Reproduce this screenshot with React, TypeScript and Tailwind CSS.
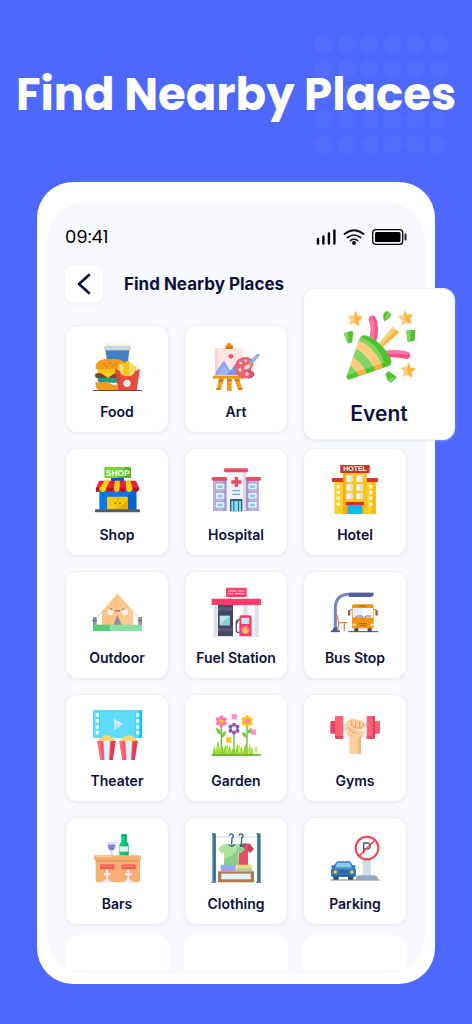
import React from "react";

type IconProps = { box: string; className?: string; children: React.ReactNode };

function Icon({ box, className = "size-[50px]", children }: IconProps) {
  return (
    <svg viewBox={box} className={className} aria-hidden="true">
      {children}
    </svg>
  );
}

function FoodIcon() {
  return (
    <Icon box="96 63 150 150">
      <path d="M141 69h63q4 0 4 4v6h-71v-6q0-4 4-4z" fill="#eef0f1" />
      <rect x="132" y="78" width="81" height="13" rx="4" fill="#cfd4d6" />
      <path d="M136 91h72l-5 45h-60z" fill="#4480c3" />
      <path d="M106 148q0-31 31-31h30q31 0 31 31z" fill="#f39c1f" />
      <g fill="#d87a12">
        <ellipse cx="133" cy="132" rx="4" ry="2.5" />
        <ellipse cx="150" cy="130" rx="4" ry="2.5" />
        <ellipse cx="167" cy="133" rx="4" ry="2.5" />
        <ellipse cx="141" cy="138" rx="3" ry="2" />
        <ellipse cx="159" cy="138" rx="3" ry="2" />
      </g>
      <rect x="113" y="147" width="65" height="15" fill="#f1c40f" />
      <rect x="105" y="160" width="75" height="14" rx="7" fill="#7f4036" />
      <path d="M122 158h44l-22 16z" fill="#f6cf22" />
      <path d="M113 174h64v14h-58q-6 0-6-14z" fill="#16a085" />
      <path d="M106 187h40q8 9 18 8h10v15h-56q-12-1-12-23z" fill="#f39c1f" />
      <path d="M174 134l10-4 3 38h-9zM210 130l10 3-4 35h-8zM219 141l11-5-4 28h-8z" fill="#f4d24b" />
      <path d="M185 128h12v42h-10zM197 123h12v47h-12z" fill="#f1c40f" />
      <path d="M181 134h10v36h-9zM208 129h8v40h-8zM219 140l5-2v24h-5z" fill="#f7dc6f" />
      <path d="M165 146l14 7q4 16 23 16t23-16l15-6-10 63h-54z" fill="#e74c3c" />
      <path d="M165 146l14 7 2 57h-5z" fill="#d9453a" />
      <circle cx="201" cy="190" r="11" fill="#ecf0f1" />
      <path d="M99 210h147v5H99z" fill="#7b3e35" />
    </Icon>
  );
}

function ArtIcon() {
  return (
    <Icon box="93 63 150 150">
      <path d="M105 84h85v84h-85z" fill="#ffe6e5" />
      <path d="M105 84h8v84h-8z" fill="#ffd0d0" />
      <path d="M137 87v-13h5v-5h11v5h5v13z" fill="#ee8f14" />
      <path d="M137 80h21v7h-21z" fill="#d97900" />
      <circle cx="153" cy="109" r="7" fill="#e9566c" />
      <path d="M107 165v-8l25-36 26 44z" fill="#8ea6fa" />
      <path d="M141 165l26-34 20 34z" fill="#7c94ec" />
      <path d="M112 165l20-29 14 20-6 9z" fill="#9fb5ff" />
      <path d="M99 167h91v9H99z" fill="#ee9413" />
      <path d="M117 176h14l-8 33h-14zM141 176h14v37h-14zM163 176h14l11 33h-14z" fill="#f29b1d" />
      <path d="M117 176h14l-2 9h-14zM141 176h14v8h-14zM163 176h14l3 8h-14zM109 204h14v5h-14zM174 204h14v5h-14z" fill="#d87a08" />
      <path d="M197 111c-22 0-33 16-32 33 1 22 18 33 39 31 10-1 18-6 19-12 1-7-6-7-9-10-5-7 7-14 6-24-1-11-10-18-23-18z" fill="#ee6174" />
      <path d="M200 148c6-2 9 2 15 6 4 3 9 5 8 10-2 7-11 12-21 12 8-5 17-9 10-14-6-4-14-5-12-14z" fill="#db4e66" />
      <g fill="#ffe8e8">
        <circle cx="197" cy="122" r="4" />
        <circle cx="182" cy="129" r="4" />
        <circle cx="180" cy="150" r="5" />
        <circle cx="201" cy="162" r="5" />
      </g>
      <path d="M191 147c1-8 7-15 16-14 3 1 4 5 3 8-3 7-11 8-19 6z" fill="#ffd9dc" />
      <path d="M205 129l8 8 4-5-8-8z" fill="#f0a321" />
      <path d="M208 125l21-21c5-4 8-3 9 0 1 4-3 7-6 10l-16 18z" fill="#7e99ec" />
      <path d="M213 127l19-20" stroke="#a5b8fc" strokeWidth="4" />
    </Icon>
  );
}

function Star({ x, y, turn }: { x: number; y: number; turn: number }) {
  return (
    <g transform={`translate(${x} ${y}) rotate(${turn})`}>
      <path
        d="M0-21L6-7 21-6 10 4 13 19 0 11-13 19-10 4-21-6-6-7z"
        fill="#ffcc7d"
        stroke="#ffcc7d"
        strokeWidth="3"
        strokeLinejoin="round"
      />
      <path d="M0-21L6-7 21-6 10 4 13 19 0 11z" fill="#ffb13d" stroke="#ffb13d" strokeWidth="2" strokeLinejoin="round" />
    </g>
  );
}

function EventIcon() {
  return (
    <Icon box="125 74 222 222" className="size-[74px]">
      <Star x={164} y={100} turn={6} />
      <Star x={316} y={98} turn={-10} />
      <Star x={323} y={255} turn={4} />
      <g strokeLinejoin="round" strokeWidth="3">
        <path d="M251 85l10-7 11 10-7 10-12 8-3-9z" fill="#4fc32d" stroke="#4fc32d" />
        <path d="M261 80l10 8-8 10-10 5z" fill="#7dd45c" />
        <path d="M131 144l23-6 4 4-4 29-12 2z" fill="#82d563" stroke="#82d563" />
        <path d="M143 141l13-3 2 6-5 27-9 1z" fill="#4fc32d" />
        <path d="M319 137l25-2-3 31-18 2z" fill="#4fc32d" stroke="#4fc32d" />
        <path d="M319 136l13-1-2 32-8 1z" fill="#82d563" />
        <path d="M257 265l8-6 23 16-15 16-11-7z" fill="#4fc32d" stroke="#4fc32d" />
        <path d="M262 282l24-9-13 18z" fill="#7dd45c" />
      </g>
      <path d="M216 102q11 24 2 60" fill="none" stroke="#ff4b8b" strokeWidth="22" strokeLinecap="round" />
      <path d="M212 97q11 34 3 66" fill="none" stroke="#ff75aa" strokeWidth="11" strokeLinecap="round" />
      <path d="M254 208q27-7 65 2" fill="none" stroke="#ff4b8b" strokeWidth="21" strokeLinecap="round" />
      <path d="M256 202q30-5 64 2" fill="none" stroke="#ff75aa" strokeWidth="10" strokeLinecap="round" />
      <path d="M235 176l41-52 21 16-52 45z" fill="#ffcc7d" />
      <path d="M243 183l43-49 11 7-50 45z" fill="#ffb13d" />
      <path
        d="M177 160q4-12 20-10c31 11 60 38 74 73 5 12 0 17-9 20l-111 38c-11 4-15-2-11-13z"
        fill="#82d563"
      />
      <path d="M175 166q45 15 73 80l-24 8Q200 206 166 190z" fill="#ffcc7d" />
      <path d="M158 216q20 10 42 46l-24 9q-9-18-26-29z" fill="#ffcc7d" />
      <path d="M190 150q-6 2-5 8c35 11 61 45 68 83l10-2c12-4 11-13 7-20-15-31-42-60-80-69z" fill="#4fc32d" />
      <path d="M140 270l121-41q8-1 11-9 3 19-10 23l-111 38q-13 4-11-11z" fill="#4fc32d" />
      <path d="M219 243l24-8 5 12-24 8zM168 260l24-8 8 11-24 8z" fill="#ffb13d" />
    </Icon>
  );
}

function ShopIcon() {
  return (
    <Icon box="96 57 150 150">
      <path d="M153 96h39v18h-39z" fill="#0459ca" />
      <rect x="133" y="66" width="80" height="33" rx="3" fill="#78d239" />
      <path d="M196 66h14q3 0 3 3v27q0 3-3 3h-38z" fill="#55b92f" />
      <text x="173" y="92" textAnchor="middle" fontFamily="Liberation Sans, Arial, sans-serif" fontSize="25" fontWeight="700" fill="#fff" textRendering="geometricPrecision">
        SHOP
      </text>
      <path d="M118 130h111v64H118z" fill="#0878f2" />
      <path d="M229 130v64h-75z" fill="#0b60d2" />
      <path d="M118 107h110l10 23q-3 11-10 11t-10-11q-2 11-11 11t-11-11q-2 11-11 11t-12-11q-2 11-12 11t-11-11q-2 11-11 11t-11-11q-2 11-10 11t-10-11z" fill="#ef1f3b" />
      <path d="M134 107h15l-10 23q-2 11-11 11t-10-11zM165 107h14v23q-3 11-9 11t-9-11zM197 107h14l7 23q-3 11-11 11t-9-11z" fill="#ffd500" />
      <path d="M108 127q6 4 10 0 0 14-10 14-1-7 0-14zM139 128h22q-2 13-11 13t-11-13zM179 128h19q-1 13-9 13t-10-13zM218 128h20q-2 13-10 13t-10-13z" fill="#bc0e2b" />
      <rect x="141" y="155" width="63" height="39" rx="4" fill="#f4c80b" />
      <path d="M173 155v39" stroke="#d7a700" strokeWidth="2" />
      <path d="M204 162v32h-33z" fill="#e5ae00" />
      <circle cx="166" cy="175" r="2.5" fill="#715400" />
      <circle cx="180" cy="175" r="2.5" fill="#715400" />
      <rect x="105" y="193" width="135" height="9" rx="2" fill="#565d65" />
    </Icon>
  );
}

function HospitalIcon() {
  const windows = [124, 152, 179];
  return (
    <Icon box="453 57 150 150">
      <path d="M459 105h138v93H459z" fill="#b7b0dd" />
      <path d="M490 105h10v93h-10zM557 105h9v93h-9z" fill="#9e97cc" />
      <path d="M500 79h57v119h-57z" fill="#f3f2fa" />
      <path d="M550 79h7v119h-7z" fill="#d9d5ec" />
      <rect x="492" y="70" width="72" height="12" rx="4" fill="#e84d64" />
      <rect x="455" y="96" width="46" height="11" rx="4" fill="#e84d64" />
      <rect x="557" y="96" width="46" height="11" rx="4" fill="#e84d64" />
      <path d="M524 96h10v10h10v10h-10v10h-10v-10h-10v-10h10z" fill="#eb4a64" />
      <path d="M517 137h23M517 148h23" stroke="#5bb0f1" strokeWidth="4" />
      {windows.map((y) => (
        <g key={y}>
          <rect x="468" y={y - 8} width="25" height="17" rx="2" fill="#ecebfa" />
          <rect x="473" y={y - 3} width="15" height="8" fill="#77d4f3" />
          <rect x="565" y={y - 8} width="25" height="17" rx="2" fill="#ecebfa" />
          <rect x="570" y={y - 3} width="15" height="8" fill="#77d4f3" />
        </g>
      ))}
      <path d="M510 162h37v37h-37z" fill="#32607e" />
      <path d="M514 168h6v31h-6zM523 168h11v31h-11zM537 168h6v31h-6z" fill="#85ddf8" />
    </Icon>
  );
}

function HotelIcon() {
  const rows = [91, 117, 143];
  return (
    <Icon box="105 57 150 150">
      <path d="M118 110h124v99H118z" fill="#ffd12d" />
      <path d="M229 110h13v99h-13z" fill="#f5b61a" />
      <path d="M144 82h71v127h-71z" fill="#ffc219" />
      <path d="M144 82h8v127h-8z" fill="#ffad09" />
      <rect x="136" y="60" width="88" height="24" fill="#d92d26" />
      <text x="180" y="79" textAnchor="middle" fontFamily="Liberation Sans, Arial, sans-serif" fontSize="21" fontWeight="700" fill="#fff" textRendering="geometricPrecision">
        HOTEL
      </text>
      <path d="M111 99h34v12h-34zM215 99h34v12h-34z" fill="#dd3328" />
      {rows.map((y) => (
        <g key={y}>
          <path d={`M154 ${y}h20v20h-20zM184 ${y}h20v20h-20z`} fill="#f7f6ef" />
          <path d={`M165 ${y}h9v20h-9zM195 ${y}h9v20h-9z`} fill="#dde1e1" />
        </g>
      ))}
      {[120, 137, 154, 172].map((y) => (
        <g key={y} fill="#fff3d0">
          <rect x="125" y={y} width="10" height="11" />
          <rect x="223" y={y} width="10" height="11" />
        </g>
      ))}
      <path d="M153 172h53v37h-53z" fill="#f7a70a" />
      <path d="M158 178h43v31h-43z" fill="#14b7ef" />
      <path d="M152 171h55v9h-55z" fill="#d92d26" />
    </Icon>
  );
}

function OutdoorIcon() {
  return (
    <Icon box="96 57 150 150">
      <path d="M173 78l-68 77M173 78l67 77" stroke="#f6cc89" strokeWidth="3" />
      <path d="M126 132l46-54 47 54v39h-93z" fill="#ffc383" />
      <path d="M172 78l47 54v39h-42z" fill="#ffc98f" />
      <circle cx="151" cy="133" r="9" fill="#fff3f2" />
      <circle cx="195" cy="133" r="9" fill="#fff3f2" />
      <path d="M151 123q3-2 5 1M187 124q2-3 5-1M166 128q3 4 7 0 4 4 7 0" fill="none" stroke="#515a68" strokeWidth="3" strokeLinecap="round" />
      <path d="M172 140l13 31h-25z" fill="#8690a5" />
      <path d="M99 147h11v24H99zM235 147h11v24h-11z" fill="#8992a7" />
      <path d="M97 155h14v5H97zM233 155h14v5h-14z" fill="#69748e" />
      <path d="M99 170h148v15q0 4-4 4H103q-4 0-4-4z" fill="#8ae09e" />
      <path d="M99 170h52q-4 9 0 19h-48q-4 0-4-4z" fill="#57ce77" />
    </Icon>
  );
}

function FuelIcon() {
  return (
    <Icon box="453 57 150 150">
      <path d="M512 84v12M547 84v12" stroke="#d8dce8" strokeWidth="3" />
      <rect x="498" y="59" width="62" height="28" rx="2" fill="#f5436a" />
      <path d="M505 69h25M535 69h18M505 77h14M524 77h29" stroke="#ffd4df" strokeWidth="3" />
      <path d="M461 109h12v95h-12zM549 109h14v65h-14zM584 109h12v95h-12z" fill="#dce1ec" />
      <path d="M474 109h45v95h-45z" fill="#464765" />
      <path d="M474 118h45v10h-45zM474 181h45v9h-45z" fill="#5c5c7e" />
      <path d="M479 143h31v29h-31z" fill="#bae9ed" />
      <path d="M510 143v29h-31z" fill="#88cfd8" />
      <rect x="455" y="92" width="148" height="19" rx="2" fill="#f73f68" />
      <path d="M540 154q-11 0-11 10v24q0 6 8 5h6" fill="none" stroke="#59536d" strokeWidth="4" />
      <path d="M534 158l-5 8" stroke="#4a465f" strokeWidth="5" />
      <path d="M538 149q0-7 7-7h23q7 0 7 7v56h-37z" fill="#f43c67" />
      <rect x="544" y="149" width="24" height="19" rx="2" fill="#b9e9ed" />
      <circle cx="556" cy="186" r="13" fill="#ff7598" />
      <path d="M556 176q15 17 0 20-14-2 0-20z" fill="#ffd640" />
      <path d="M458 206h142" stroke="#c7ccd9" strokeWidth="2" />
    </Icon>
  );
}

function BusIcon() {
  return (
    <Icon box="105 57 150 150">
      <path d="M121 181v-59q0-43 42-43h68" fill="none" stroke="#7783bf" strokeWidth="9" />
      <path d="M162 74h74v5q0 8-10 8h-64z" fill="#515e99" />
      <path d="M116 180h10v8h7v3h-24v-3h7z" fill="#45548e" stroke="#45548e" strokeWidth="3" />
      <path d="M126 140l5 24h27M148 165v24M132 165l-5 23" fill="none" stroke="#db8a4c" strokeWidth="4" />
      <path d="M159 191h91" stroke="#4a4e60" strokeWidth="3" />
      <path d="M172 126q-10-4-10 5v9M236 126q10-4 10 5v9" fill="none" stroke="#6d6b78" strokeWidth="3" />
      <rect x="159" y="126" width="7" height="17" rx="3" fill="#bd572a" />
      <rect x="241" y="126" width="7" height="17" rx="3" fill="#bd572a" />
      <rect x="178" y="177" width="12" height="15" rx="2" fill="#464b61" />
      <rect x="218" y="177" width="12" height="15" rx="2" fill="#464b61" />
      <rect x="171" y="109" width="65" height="72" rx="5" fill="#f49509" />
      <path d="M192 111h22v6h-22z" fill="#c97b0d" />
      <path d="M173 120h61v28h-61z" fill="#e9eafb" />
      <path d="M203 120h31v28h-31z" fill="#fafaff" />
      <path d="M181 149l6-5h15v5M207 149l6-5h16" fill="none" stroke="#667498" strokeWidth="3" />
      <path d="M192 167h24M195 173h18" stroke="#9c5b17" strokeWidth="3" />
      <path d="M173 167h10v7h-10zM225 167h10v7h-10z" fill="#ffe8aa" />
    </Icon>
  );
}

function Popcorn({ x }: { x: number }) {
  return (
    <g transform={`translate(${x} 0)`}>
      <path d="M3 155c0-11 6-12 11-12 2-8 22-10 27-1 9-1 12 6 12 13z" fill="#ffd66e" />
      <path d="M0 153h55l-9 57H9z" fill="#ff5366" />
      <path d="M43 153h12l-9 57h-8z" fill="#e8364e" />
      <path d="M18 153h20l-3 57H21z" fill="#daf5fd" />
      <path d="M0 153h8l7 57H9z" fill="#ff6e7a" />
    </g>
  );
}

function TheaterIcon() {
  return (
    <Icon box="96 60 150 150">
      <rect x="99" y="60" width="147" height="84" rx="3" fill="#5edcfa" />
      <path d="M237 60h6q3 0 3 3v78q0 3-3 3h-6z" fill="#0bc9f7" />
      <path d="M118 60v84M227 60v84" stroke="#40cff5" strokeWidth="2" />
      {[69, 87, 105, 122].map((y) => (
        <path key={y} d={`M107 ${y}h10v11h-10zM228 ${y}h10v11h-10z`} fill="#e7f9ff" />
      ))}
      <path d="M162 86l28 17-28 17z" fill="#d1f2ff" />
      <path d="M162 120l28-17h-28z" fill="#b6e8f9" />
      <Popcorn x={112} />
      <Popcorn x={178} />
    </Icon>
  );
}

function Flower({ x, y, petal, center }: { x: number; y: number; petal: string; center: string }) {
  return (
    <g transform={`translate(${x} ${y})`}>
      {[0, 60, 120, 180, 240, 300].map((angle) => (
        <circle key={angle} r="6" cy="-12" transform={`rotate(${angle})`} fill={petal} />
      ))}
      <circle r="11" fill={petal} />
      <circle r="7" fill={center} />
    </g>
  );
}

function GardenIcon() {
  return (
    <Icon box="453 60 150 150">
      <path d="M484 106v85M522 130v60M561 106v85" stroke="#69bd35" strokeWidth="4" />
      <path d="M484 133q-15 1-16-19 15 2 16 19zM484 143q1-18 14-19 0 17-14 19zM561 143q-2-16-15-18 0 17 15 18zM561 132q0-15 15-18 1 16-15 18z" fill="#72c83b" />
      <Flower x={484} y={94} petal="#ff70c4" center="#ffc817" />
      <Flower x={561} y={94} petal="#ffc20c" center="#ff80c4" />
      <Flower x={522} y={116} petal="#8b55b5" center="#fff" />
      <g fill="#ff8bd0">
        <path d="M515 72h6l2 4 2-4h6v6l-2 2 2 2v6h-6l-2-3-2 3h-6v-6l2-2-2-2zM572 118h6l2 4 2-4h6v6l-2 2 2 2v6h-6l-2-3-2 3h-6v-6l2-2-2-2z" />
      </g>
      <path d="M498 142h6l2 3 2-3h6v6l-2 2 2 2v6h-6l-2-2-2 2h-6v-6l2-2-2-2z" fill="#ffc20c" />
      <path d="M457 197q2-14 5-30 5 10 5 18 3-20 7-33 6 17 6 34 2-17 6-22 6 13 5 22 3-20 7-25 4 14 4 27 4-15 7-21 6 14 4 23 5-17 9-22 4 13 3 23 4-22 8-29 4 16 4 30 4-18 8-24 3 13 3 25 5-24 9-31 4 15 2 31 6-18 9-21 2 12 1 22 5-20 7-25 3 14 3 27z" fill="#8ed426" />
      <path d="M468 195l6-31 5 31M497 195l5-28 4 28M534 195l4-30 6 30M565 195l4-31 5 31M583 195l5-25 5 25" fill="none" stroke="#b1e951" strokeWidth="3" />
      <path d="M457 195h145" stroke="#58a92c" strokeWidth="5" strokeLinecap="round" />
    </Icon>
  );
}

function GymIcon() {
  return (
    <Icon box="105 60 150 150">
      <path d="M143 102h73v20h-73z" fill="#dde0e7" />
      <rect x="106" y="93" width="20" height="38" rx="3" fill="#e94464" />
      <rect x="235" y="93" width="20" height="38" rx="3" fill="#ff6073" />
      <rect x="120" y="78" width="25" height="68" rx="3" fill="#ff6073" />
      <path d="M120 138h25v5q0 3-3 3h-19q-3 0-3-3z" fill="#e6425e" />
      <rect x="215" y="78" width="25" height="68" rx="3" fill="#ff6073" />
      <path d="M233 78h4q3 0 3 3v62q0 3-3 3h-22v-7h18z" fill="#e6425e" />
      <path d="M163 192v-48q-10-10-10-27V98q3-9 11-8 3-5 10-3 7-2 10 3 6-3 10 1 6-3 9 3 5 0 5 8-1 16 0 24-1 13-10 20v46z" fill="#ffd09e" />
      <path d="M190 145q5-4 8-10v57h-8z" fill="#f4b576" />
      <path d="M157 112q10 3 10 10 4 7 13 5M170 91v14q3 8 11 7M182 93v18M194 95v17M205 100q3 13-7 14h-15" fill="none" stroke="#e79c60" strokeWidth="3" strokeLinecap="round" />
      <path d="M182 118h22q2 0 2-7h10v11h-30z" fill="#eceff5" />
    </Icon>
  );
}

function Stool({ x }: { x: number }) {
  return (
    <g transform={`translate(${x} 0)`}>
      <path d="M-3 171h6v12h7v6H3v10q1 5 10 7v4h-26v-4q9-2 10-7v-10h-7v-6h7z" fill="#eeeafd" />
      <rect x="-21" y="156" width="43" height="15" rx="3" fill="#f45c55" />
      <path d="M-18 162h35" stroke="#ff8374" strokeWidth="4" />
    </g>
  );
}

function BarsIcon() {
  return (
    <Icon box="96 62 150 150">
      <path d="M142 90h25q2 22-9 27v9l7 3h-21l7-3v-9q-12-7-9-27z" fill="#dedafb" />
      <path d="M144 97h21q0 17-10 17t-11-17z" fill="#7972df" />
      <path d="M149 100l3 5M157 101l4 4" stroke="#bdbaff" strokeWidth="3" />
      <path d="M184 66h16v22q6 6 6 14v23q0 5-5 5h-18q-5 0-5-5v-23q0-8 6-14z" fill="#06ce75" />
      <path d="M184 66h16v6h-16z" fill="#00a85a" />
      <path d="M195 72h5v16q6 6 6 14v23q0 5-5 5h-6z" fill="#00b969" />
      <path d="M179 102h26v16h-26z" fill="#eeeafb" />
      <path d="M107 140h133v64q0 6-6 6H113q-6 0-6-6z" fill="#f7b074" />
      <path d="M107 141h133v7H107z" fill="#e89c62" />
      <rect x="102" y="129" width="141" height="14" rx="3" fill="#f5ad72" />
      <path d="M107 132h48" stroke="#ffc993" strokeWidth="4" />
      <Stool x={141} />
      <Stool x={205} />
    </Icon>
  );
}

function ClothingIcon() {
  return (
    <Icon box="453 62 150 150">
      <path d="M461 74h135" stroke="#bfe0f2" strokeWidth="3" />
      <path d="M539 95l17-2 13 1 12 16-10 11-7-5v42h-29z" fill="#dd5065" />
      <path d="M563 99l6-5 12 16-10 11-7-5z" fill="#cf4059" />
      <path d="M497 94h9q9 8 18 0h11l19 17-11 12-8-5v40h-43v-40l-6 7-12-14 12-13z" fill="#aee29d" />
      <path d="M535 103q-7 25-38 34-5 3-5 21h43v-40l8 5 11-12z" fill="#8dcc89" />
      <path d="M503 95q12 7 20 0l4 1q-12 17-24-1zM539 96q8 5 15-2l3 2q-8 10-18 7z" fill="#346382" />
      <path d="M509 69q2-7 8-3 7 5-1 12l-1 17M538 69q2-7 8-3 7 5-1 12l-1 17" fill="none" stroke="#315b79" strokeWidth="4" strokeLinecap="round" />
      <path d="M457 67h10v139h-10zM591 67h10v139h-10z" fill="#4f86a7" />
      <path d="M461 67h6v139h-6zM595 67h6v139h-6z" fill="#346a8b" />
      <path d="M455 209h14M589 209h14M456 65h11M590 65h11" stroke="#305f7f" strokeWidth="4" />
      <rect x="482" y="157" width="46" height="10" rx="3" fill="#82b5ef" />
      <rect x="482" y="167" width="46" height="10" rx="3" fill="#b999e1" />
      <rect x="529" y="157" width="47" height="10" rx="3" fill="#ffd778" />
      <rect x="529" y="167" width="47" height="10" rx="3" fill="#9fdc9b" />
      <rect x="474" y="177" width="108" height="33" fill="#b37a52" />
      <rect x="484" y="184" width="88" height="17" fill="#e2f3fb" />
    </Icon>
  );
}

function ParkingIcon() {
  return (
    <Icon box="105 62 150 150">
      <path d="M203 139h25v55h-25z" fill="#cfdfe6" />
      <path d="M203 139h25v8h-25z" fill="#b5cad5" />
      <path d="M183 202v-6q0-7 9-7h46q11 2 11 13z" fill="#91abc0" />
      <path d="M106 203h148" stroke="#798a9a" strokeWidth="3" />
      <circle cx="216" cy="107" r="34" fill="#fff" stroke="#f63e4c" strokeWidth="6" />
      <path d="M206 123V92h10q10 0 10 9t-10 9h-10" fill="none" stroke="#4c5c70" strokeWidth="4" />
      <path d="M192 131l48-48" stroke="#f63e4c" strokeWidth="5" />
      <rect x="115" y="190" width="16" height="12" rx="2" fill="#35475a" />
      <rect x="159" y="190" width="16" height="12" rx="2" fill="#35475a" />
      <path d="M109 159h9l6-10q2-2 5-2h33q3 0 5 2l6 10h9q2 4-3 6l4 7v16q0 6-5 6h-65q-5 0-5-6v-16l4-7q-6-2-3-6z" fill="#3979b8" />
      <path d="M126 151h39l5 14h-49z" fill="#86cbea" />
      <path d="M120 167h51" stroke="#66a5d8" strokeWidth="3" />
      <path d="M134 174h24l3 9h-30z" fill="#2863a0" />
      <circle cx="121" cy="179" r="5" fill="#ffd42b" />
      <circle cx="171" cy="179" r="5" fill="#ffd42b" />
      <path d="M116 190h60" stroke="#245788" strokeWidth="3" />
    </Icon>
  );
}

const places = [
  { label: "Food", Picture: FoodIcon },
  { label: "Art", Picture: ArtIcon },
  { label: "Event", Picture: EventIcon, featured: true },
  { label: "Shop", Picture: ShopIcon },
  { label: "Hospital", Picture: HospitalIcon },
  { label: "Hotel", Picture: HotelIcon },
  { label: "Outdoor", Picture: OutdoorIcon },
  { label: "Fuel Station", Picture: FuelIcon },
  { label: "Bus Stop", Picture: BusIcon },
  { label: "Theater", Picture: TheaterIcon },
  { label: "Garden", Picture: GardenIcon },
  { label: "Gyms", Picture: GymIcon },
  { label: "Bars", Picture: BarsIcon },
  { label: "Clothing", Picture: ClothingIcon },
  { label: "Parking", Picture: ParkingIcon },
];

function StatusBar() {
  return (
    <div className="flex h-6 items-center justify-between text-black">
      <time className="font-[Poppins,Inter,sans-serif] text-[18px] leading-6">09:41</time>
      <div className="flex items-center gap-[7px]">
        <svg viewBox="0 0 20 16" className="h-4 w-5" aria-hidden="true">
          <path d="M2 10v4.500M7.400 7.500v7M12.900 4.500v10M18.400 1.500v13" stroke="#000" strokeWidth="2.400" strokeLinecap="round" />
        </svg>
        <svg viewBox="0 0 22 16" className="h-4 w-[22px]" aria-hidden="true">
          <path d="M1.500 5q9.500-7.500 19 0M4.500 8.500q6.500-5 13 0M7.500 11.500q3.500-2.500 7 0" fill="none" stroke="#111" strokeWidth="1.700" strokeLinecap="round" />
          <circle cx="11" cy="14" r="1.900" />
        </svg>
        <svg viewBox="0 0 35 16" className="h-4 w-[35px]" aria-hidden="true">
          <rect x="0.700" y="0.700" width="30" height="14.600" rx="3" fill="none" stroke="#000" strokeWidth="1.300" />
          <rect x="3" y="3" width="25.500" height="10" rx="1.500" />
          <path d="M33.500 5.500v5" stroke="#222" strokeWidth="2" strokeLinecap="round" />
        </svg>
      </div>
    </div>
  );
}

export default function App() {
  return (
    <main className="min-h-screen bg-[#4d68ff] pb-10 font-[Inter,sans-serif] text-[#0b113c]">
      <header className="relative h-[182px] pt-[67px]">
        <div className="absolute top-[35px] right-6 grid grid-cols-6 gap-x-[4px] gap-y-[6px]" aria-hidden="true">
          {Array.from({ length: 30 }, (_, i) => (
            <span key={i} className="size-[19px] rounded-full bg-[#536dff]" />
          ))}
        </div>
        <h1 className="relative text-center font-[Poppins,Inter,sans-serif] text-[45px] leading-[56px] font-bold whitespace-nowrap text-white">
          Find Nearby Places
        </h1>
      </header>

      <section className="mx-[37px] rounded-[36px] bg-white px-[10px] pt-[21px] pb-[11px]">
        <div className="rounded-[36px] bg-[#f8f9fe] px-[18px] pt-[22px] pb-[3px]">
          <StatusBar />

          <div className="mt-4 flex items-center gap-[21px]">
            <button type="button" aria-label="Back" className="grid size-[38px] place-items-center rounded-lg bg-white shadow-sm shadow-slate-200/60">
              <svg viewBox="0 0 14 22" className="h-[22px] w-[14px]" aria-hidden="true">
                <path d="M12 2L2 11l10 9" fill="none" stroke="#0b113c" strokeWidth="2.600" strokeLinecap="round" strokeLinejoin="round" />
              </svg>
            </button>
            <h2 className="text-[17px] leading-6 font-bold whitespace-nowrap">Find Nearby Places</h2>
          </div>

          <ul className="mt-[22px] grid grid-cols-3 gap-[15px]">
            {places.map(({ label, Picture, featured }) => (
              <li key={label} className="relative h-[108px]">
                {featured ? (
                  <button
                    type="button"
                    className="absolute -top-[37px] left-0 flex size-[152px] flex-col items-center rounded-xl border border-[#eeeff4] bg-white pt-[21px] shadow-sm shadow-slate-300/40"
                  >
                    <Picture />
                    <span className="mt-4 text-[21px] leading-7 font-semibold">{label}</span>
                  </button>
                ) : (
                  <button
                    type="button"
                    className="flex size-full flex-col items-center rounded-xl border border-[#eeeff4] bg-white pt-[15px] shadow-sm shadow-slate-200/50"
                  >
                    <Picture />
                    <span className="mt-[11px] text-[14px] leading-5 font-semibold whitespace-nowrap">{label}</span>
                  </button>
                )}
              </li>
            ))}
          </ul>

          <div className="mt-[10px] grid grid-cols-3 gap-[15px]" aria-hidden="true">
            <div className="h-[35px] rounded-t-xl bg-white" />
            <div className="h-[35px] rounded-t-xl bg-white" />
            <div className="h-[35px] rounded-t-xl bg-white" />
          </div>
        </div>
      </section>
    </main>
  );
}
